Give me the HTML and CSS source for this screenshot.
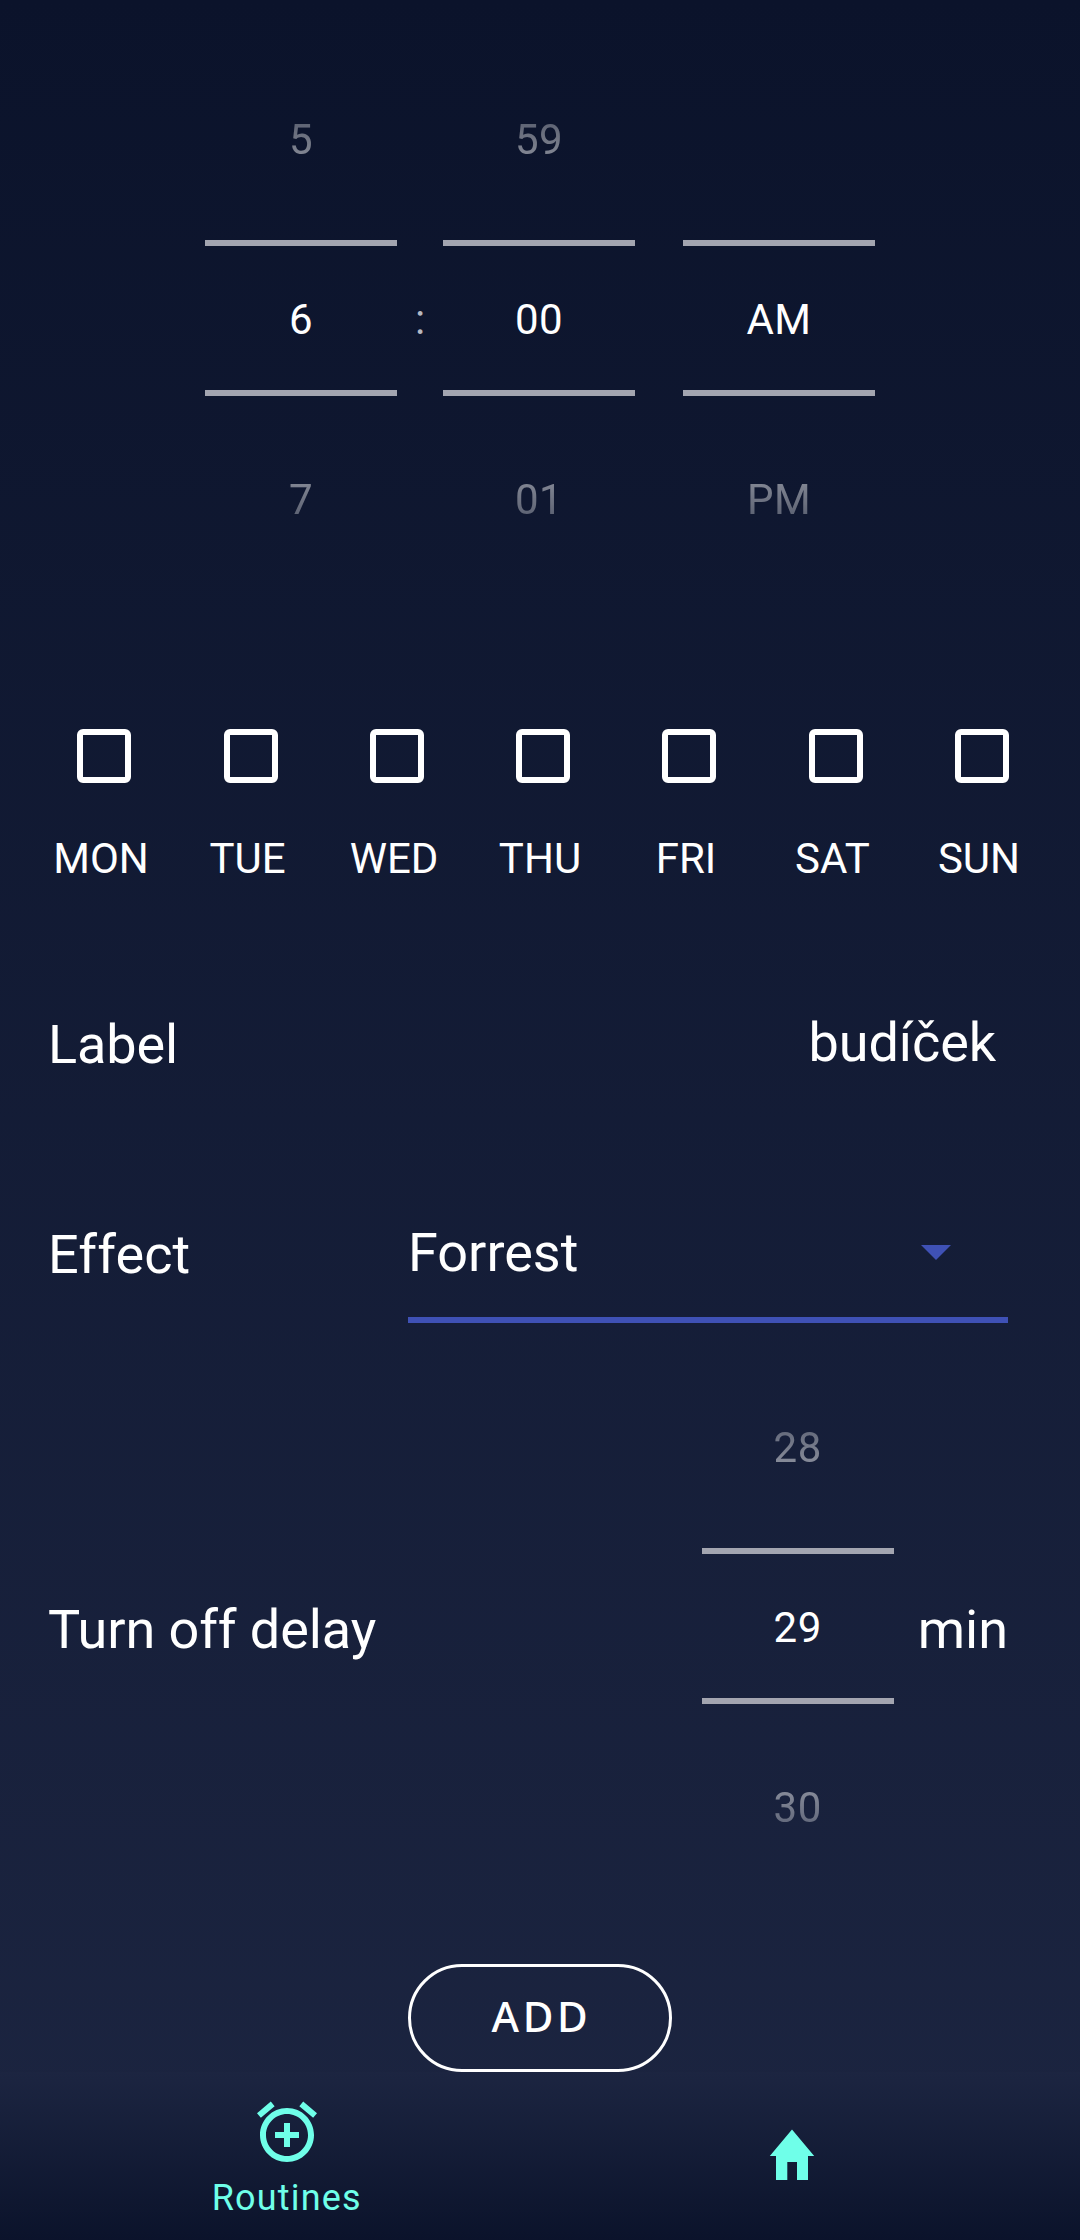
FILE: index.html
```html
<!DOCTYPE html>
<html lang="en">
<head>
<meta charset="utf-8">
<title>Routine</title>
<link rel="stylesheet" href="styles.css">
</head>
<body>
<main class="screen">
  <section class="time">
    <div class="picker">
      <div class="prev">5</div><div class="current">6</div><div class="next">7</div>
    </div>
    <div class="colon">:</div>
    <div class="picker">
      <div class="prev">59</div><div class="current">00</div><div class="next">01</div>
    </div>
    <div class="picker period">
      <div class="prev"></div><div class="current">AM</div><div class="next">PM</div>
    </div>
  </section>

  <section class="days">
    <label class="day"><span class="box"></span><span class="day-name">MON</span></label>
    <label class="day"><span class="box"></span><span class="day-name">TUE</span></label>
    <label class="day"><span class="box"></span><span class="day-name">WED</span></label>
    <label class="day"><span class="box"></span><span class="day-name">THU</span></label>
    <label class="day"><span class="box"></span><span class="day-name">FRI</span></label>
    <label class="day"><span class="box"></span><span class="day-name">SAT</span></label>
    <label class="day"><span class="box"></span><span class="day-name">SUN</span></label>
  </section>

  <section class="row label-row">
    <span class="caption">Label</span>
    <span class="label-value">budíček</span>
  </section>

  <section class="row effect-row">
    <span class="caption">Effect</span>
    <div class="select">
      <span>Forrest</span>
      <svg class="arrow" width="30" height="15" viewBox="0 0 30 15"><path d="M0 0h30L15 15z"/></svg>
    </div>
  </section>

  <section class="row delay-row">
    <span class="caption">Turn off delay</span>
    <div class="picker">
      <div class="prev">28</div><div class="current">29</div><div class="next">30</div>
    </div>
    <span class="unit">min</span>
  </section>

  <button class="add" type="button">ADD</button>

  <nav class="nav">
    <a class="tab routines">
      <svg width="72" height="72" viewBox="0 0 24 24"><path d="M7.88 3.39L6.6 1.86 2 5.71l1.29 1.53 4.59-3.85zM22 5.72l-4.6-3.86-1.29 1.53 4.6 3.86L22 5.72zM12 4c-4.97 0-9 4.03-9 9s4.02 9 9 9c4.97 0 9-4.03 9-9s-4.03-9-9-9zm0 16c-3.87 0-7-3.13-7-7s3.13-7 7-7 7 3.13 7 7-3.13 7-7 7zm1-11h-2v3H8v2h3v3h2v-3h3v-2h-3V9z"/></svg>
      <span>Routines</span>
    </a>
    <a class="tab home">
      <svg width="46" height="52" viewBox="0 0 46 52"><path d="M23 .5L45.200 27H39V51H28V33H18.300V51H7V27H.8z"/></svg>
    </a>
  </nav>
</main>
</body>
</html>
```
FILE: styles.css
```css
* { box-sizing: border-box; }

body {
  margin: 0;
  font-family: Roboto, "Liberation Sans", sans-serif;
  color: #fff;
}

.screen {
  display: flex;
  flex-direction: column;
  width: 1080px;
  height: 2240px;
  padding-top: 48px;
  overflow: hidden;
  background: linear-gradient(#0b132b, #1c2541);
}

.time {
  display: flex;
  justify-content: center;
}

.picker {
  width: 192px;
  height: 540px;
  flex: none;
  font-size: 42px;
  letter-spacing: .5px;
  text-align: center;
}

.prev {
  height: 192px;
  line-height: 183px;
  mask-image: linear-gradient(transparent, rgba(0, 0, 0, .87));
}

.current {
  height: 156px;
  border: solid #a3a5b0;
  border-width: 6px 0;
  line-height: 147px;
}

.next {
  height: 192px;
  line-height: 207px;
  mask-image: linear-gradient(rgba(0, 0, 0, .87), transparent);
}

.colon {
  width: 46px;
  font-size: 42px;
  line-height: 543px;
  height: 540px;
  text-align: center;
  color: #b6b8c1;
}

.period { margin-left: 48px; }

.days {
  display: grid;
  grid-template-columns: 146px 147px 146px 146px 146px 147px 146px;
  margin: 141px 28px 0;
}

.day {
  display: flex;
  flex-direction: column;
  align-items: center;
  gap: 51px;
}

.box {
  width: 54px;
  height: 54px;
  margin-left: 6px;
  border: 6px solid #fff;
  border-radius: 6px;
}

.day-name {
  font-size: 42px;
  line-height: 50px;
}

.row {
  display: flex;
  justify-content: space-between;
  padding: 0 72px 0 48px;
  font-size: 54px;
  line-height: 64px;
}

.label-row {
  margin-top: 129px;
  letter-spacing: -.1px;
}

.label-value {
  margin: -2px 12px 0 0;
}

.effect-row {
  align-items: flex-start;
  margin-top: 130px;
}

.effect-row .caption {
  padding-top: 16px;
  letter-spacing: .1px;
}

.select {
  display: flex;
  align-items: center;
  justify-content: space-between;
  width: 600px;
  height: 116px;
  padding: 0 57px 19px 0;
  border-bottom: 6px solid #3f51b5;
}

.arrow { fill: #3f51b5; }

.delay-row {
  align-items: center;
  margin-top: 33px;
}

.delay-row .caption {
  flex: 1;
  padding-top: 8px;
  letter-spacing: -.1px;
}

.unit {
  margin-left: 24px;
  padding-top: 8px;
}

.add {
  flex: none;
  align-self: center;
  width: 264px;
  height: 108px;
  margin: 68px 0 0;
  padding: 0 0 4px 3px;
  border: 3px solid #fff;
  border-radius: 54px;
  background: none;
  color: #fff;
  font: 500 42px/50px "Noto Sans", Roboto, sans-serif;
  letter-spacing: 3.75px;
}

.nav {
  display: grid;
  grid-template-columns: 1fr 1fr;
  flex: 1;
  padding: 0 35px 0 34px;
  background: linear-gradient(#1c2541, #0b132b);
  color: #6fffe9;
  fill: #6fffe9;
}

.tab {
  display: flex;
  flex-direction: column;
  align-items: center;
}

.routines {
  padding-top: 24px;
  font-size: 36px;
  line-height: 42px;
  letter-spacing: 1.2px;
}

.routines span { margin-top: 9px; }

.home { padding-top: 57px; }
```
